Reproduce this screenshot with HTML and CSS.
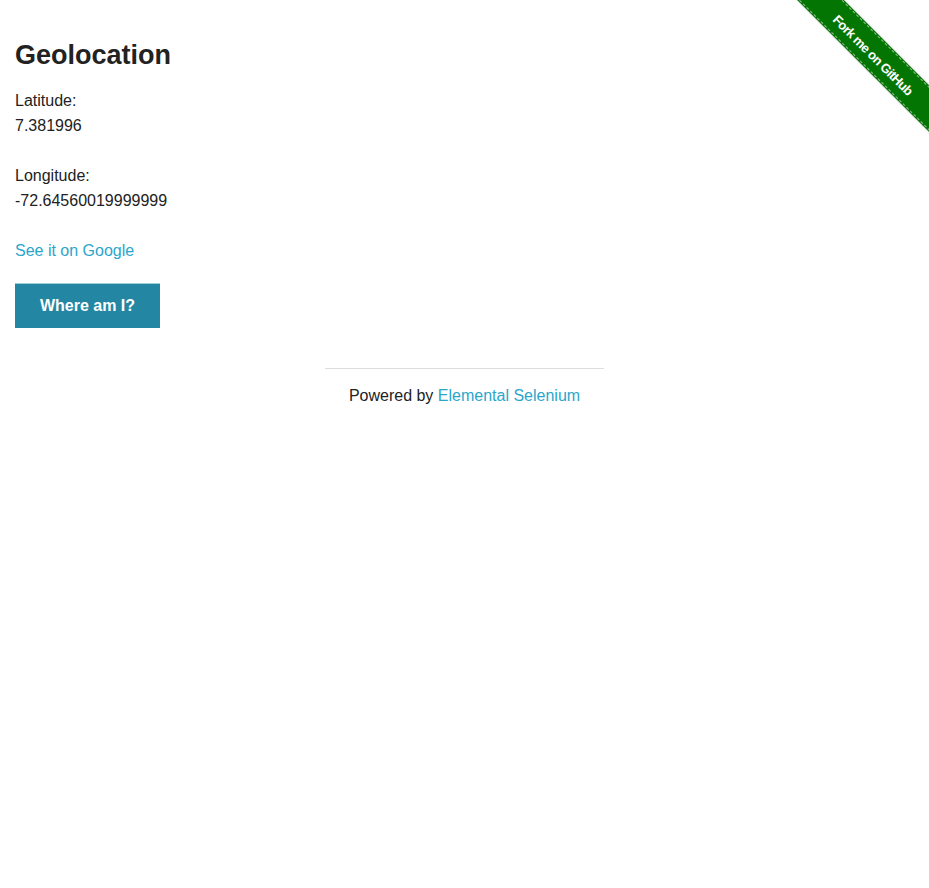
FILE: index.html
```html
<!DOCTYPE html>
<html>
<head>
<meta charset="utf-8">
<title>The Internet</title>
<link rel="stylesheet" href="styles.css">
</head>
<body>
<a class="ribbon" href="#"><span class="band">Fork me on GitHub</span></a>
<div class="page">
  <h3 class="title">Geolocation</h3>
  <div class="info">
    <div class="line">Latitude:</div>
    <div class="line">7.381996</div>
    <div class="line spaced">Longitude:</div>
    <div class="line">-72.64560019999999</div>
    <div class="line spaced"><a class="link" href="#">See it on Google</a></div>
  </div>
  <button class="btn" type="button">Where am I?</button>
</div>
<div class="footer">
  <hr class="rule">
  <div class="powered">Powered by <a class="link" href="#">Elemental Selenium</a></div>
</div>
</body>
</html>
```

FILE: styles.css
```css
html, body {
  margin: 0;
  padding: 0;
  background: #fff;
}
body {
  font-family: "Liberation Sans", Arial, sans-serif;
  font-size: 16px;
  color: #222;
}
.page {
  padding: 39px 15px 0;
}
.title {
  margin: 0;
  font-size: 27px;
  line-height: 32px;
  font-weight: bold;
  color: #222;
}
.info {
  margin-top: 17px;
}
.line {
  line-height: 25px;
}
.spaced {
  margin-top: 25px;
}
.link {
  color: #2ba6cb;
  text-decoration: none;
}
.btn {
  display: block;
  margin-top: 20px;
  width: 145px;
  height: 45px;
  padding: 0;
  border: none;
  border-top: 1px solid #9ccddb;
  background: #2386a2;
  color: #fff;
  font-family: "Liberation Sans", Arial, sans-serif;
  font-size: 16px;
  font-weight: bold;
  cursor: pointer;
}
.footer {
  text-align: center;
}
.rule {
  width: 279px;
  margin: 40px auto 14px;
  border: 0;
  border-top: 1px solid #ddd;
  height: 0;
}
.powered {
  line-height: 25px;
}
.ribbon {
  position: absolute;
  top: 0;
  right: 0;
  width: 149px;
  height: 149px;
  overflow: hidden;
  text-decoration: none;
}
.band {
  position: absolute;
  left: -30.5px;
  top: 33px;
  width: 240px;
  height: 33px;
  box-sizing: border-box;
  padding-top: 4px;
  padding-left: 12px;
  background: #037503;
  color: #fff;
  font-family: "Liberation Sans", Arial, sans-serif;
  font-size: 13px;
  font-weight: bold;
  letter-spacing: -0.6px;
  line-height: 29px;
  text-align: center;
  transform: rotate(45deg);
  box-shadow: 0 0 2px rgba(0,0,0,0.3);
}
.band::before,
.band::after {
  content: "";
  position: absolute;
  left: 0;
  right: 0;
  border-top: 1px dashed rgba(255,255,255,0.55);
}
.band::before {
  top: 1px;
}
.band::after {
  bottom: 1px;
}
```
